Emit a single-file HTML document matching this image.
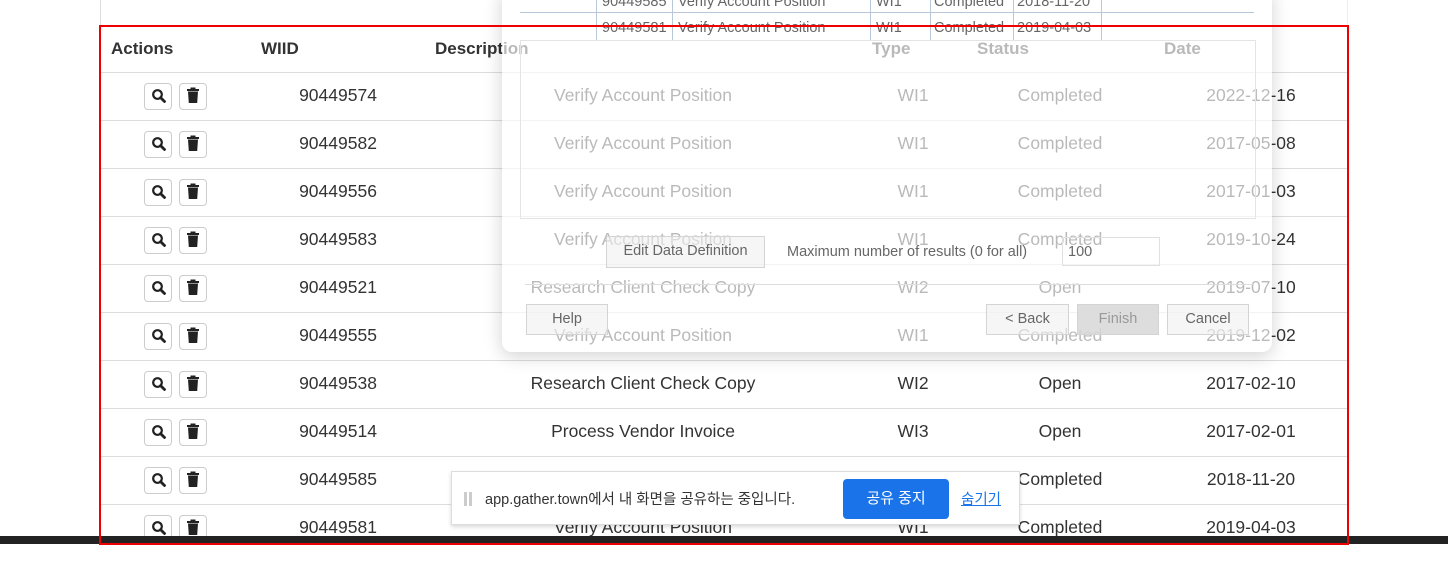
<!DOCTYPE html>
<html><head><meta charset="utf-8"><style>
*{margin:0;padding:0;box-sizing:border-box}
body{width:1448px;height:570px;background:#fff;position:relative;overflow:hidden;font-family:"Liberation Sans",Arial,sans-serif;color:#333}
.a{position:absolute}
.h{position:absolute;top:39px;font-weight:bold;font-size:17px;color:#333}
.row{position:absolute;left:100px;width:1248px;height:48px;border-top:1px solid #ddd}
.c{position:absolute;top:12px;font-size:17.5px;text-align:center;transform:translateX(-50%);white-space:nowrap}
.btn{position:absolute;top:10px;width:28px;height:27px;border:1px solid #ccc;border-radius:4px;background:#fff}
.dlg{position:absolute;left:502px;top:-10px;width:770px;height:362px;background:rgba(255,255,255,.66);border-radius:0 0 10px 10px;box-shadow:0 4px 18px rgba(0,0,0,.18)}
.dt{font-family:"Liberation Sans","Noto Sans CJK KR",sans-serif;color:#666;font-size:14.5px;position:absolute}
.db{position:absolute;border:1px solid #d4d4d4;background:rgba(240,240,240,.6);font-size:14.5px;color:#666;text-align:center;line-height:29px}
</style></head><body>
<div class="a" style="left:100px;top:0;width:1px;height:25px;background:#ddd"></div>
<div class="a" style="left:1347px;top:0;width:1px;height:25px;background:#eee"></div>

<div class="h" style="left:111px">Actions</div>
<div class="h" style="left:261px">WIID</div>
<div class="h" style="left:435px">Description</div>
<div class="h" style="left:872px">Type</div>
<div class="h" style="left:977px">Status</div>
<div class="h" style="left:1164px">Date</div>

<div class="row" style="top:72px"><div class="btn" style="left:44px"></div><div class="btn" style="left:79px"></div><div class="c" style="left:238px">90449574</div><div class="c" style="left:543px">Verify Account Position</div><div class="c" style="left:813px">WI1</div><div class="c" style="left:960px">Completed</div><div class="c" style="left:1151px">2022-12-16</div></div>
<div class="row" style="top:120px"><div class="btn" style="left:44px"></div><div class="btn" style="left:79px"></div><div class="c" style="left:238px">90449582</div><div class="c" style="left:543px">Verify Account Position</div><div class="c" style="left:813px">WI1</div><div class="c" style="left:960px">Completed</div><div class="c" style="left:1151px">2017-05-08</div></div>
<div class="row" style="top:168px"><div class="btn" style="left:44px"></div><div class="btn" style="left:79px"></div><div class="c" style="left:238px">90449556</div><div class="c" style="left:543px">Verify Account Position</div><div class="c" style="left:813px">WI1</div><div class="c" style="left:960px">Completed</div><div class="c" style="left:1151px">2017-01-03</div></div>
<div class="row" style="top:216px"><div class="btn" style="left:44px"></div><div class="btn" style="left:79px"></div><div class="c" style="left:238px">90449583</div><div class="c" style="left:543px">Verify Account Position</div><div class="c" style="left:813px">WI1</div><div class="c" style="left:960px">Completed</div><div class="c" style="left:1151px">2019-10-24</div></div>
<div class="row" style="top:264px"><div class="btn" style="left:44px"></div><div class="btn" style="left:79px"></div><div class="c" style="left:238px">90449521</div><div class="c" style="left:543px">Research Client Check Copy</div><div class="c" style="left:813px">WI2</div><div class="c" style="left:960px">Open</div><div class="c" style="left:1151px">2019-07-10</div></div>
<div class="row" style="top:312px"><div class="btn" style="left:44px"></div><div class="btn" style="left:79px"></div><div class="c" style="left:238px">90449555</div><div class="c" style="left:543px">Verify Account Position</div><div class="c" style="left:813px">WI1</div><div class="c" style="left:960px">Completed</div><div class="c" style="left:1151px">2019-12-02</div></div>
<div class="row" style="top:360px"><div class="btn" style="left:44px"></div><div class="btn" style="left:79px"></div><div class="c" style="left:238px">90449538</div><div class="c" style="left:543px">Research Client Check Copy</div><div class="c" style="left:813px">WI2</div><div class="c" style="left:960px">Open</div><div class="c" style="left:1151px">2017-02-10</div></div>
<div class="row" style="top:408px"><div class="btn" style="left:44px"></div><div class="btn" style="left:79px"></div><div class="c" style="left:238px">90449514</div><div class="c" style="left:543px">Process Vendor Invoice</div><div class="c" style="left:813px">WI3</div><div class="c" style="left:960px">Open</div><div class="c" style="left:1151px">2017-02-01</div></div>
<div class="row" style="top:456px"><div class="btn" style="left:44px"></div><div class="btn" style="left:79px"></div><div class="c" style="left:238px">90449585</div><div class="c" style="left:543px">Verify Account Position</div><div class="c" style="left:813px">WI1</div><div class="c" style="left:960px">Completed</div><div class="c" style="left:1151px">2018-11-20</div></div>
<div class="row" style="top:504px"><div class="btn" style="left:44px"></div><div class="btn" style="left:79px"></div><div class="c" style="left:238px">90449581</div><div class="c" style="left:543px">Verify Account Position</div><div class="c" style="left:813px">WI1</div><div class="c" style="left:960px">Completed</div><div class="c" style="left:1151px">2019-04-03</div></div>

<svg class="a" style="left:0;top:0" width="1448" height="570">
<defs>
<g id="mag"><circle cx="-1.5" cy="-1.5" r="4.3" fill="none" stroke="#222" stroke-width="2.2"/><path d="M1.6 1.6 L5.5 5.5" stroke="#222" stroke-width="2.8" stroke-linecap="round"/></g>
<g id="trash"><rect x="-6" y="-7" width="12" height="2" fill="#222"/><rect x="-2.5" y="-8.5" width="5" height="2" fill="#222"/><path d="M-5 -4.5 H5 L4.2 7 H-4.2 Z" fill="#222"/></g>
</defs>
<use href="#mag" x="159" y="96"/><use href="#trash" x="193" y="96"/>
<use href="#mag" x="159" y="144"/><use href="#trash" x="193" y="144"/>
<use href="#mag" x="159" y="192"/><use href="#trash" x="193" y="192"/>
<use href="#mag" x="159" y="240"/><use href="#trash" x="193" y="240"/>
<use href="#mag" x="159" y="288"/><use href="#trash" x="193" y="288"/>
<use href="#mag" x="159" y="336"/><use href="#trash" x="193" y="336"/>
<use href="#mag" x="159" y="384"/><use href="#trash" x="193" y="384"/>
<use href="#mag" x="159" y="432"/><use href="#trash" x="193" y="432"/>
<use href="#mag" x="159" y="480"/><use href="#trash" x="193" y="480"/>
<use href="#mag" x="159" y="528"/><use href="#trash" x="193" y="528"/>
</svg>

<div class="a" style="left:0;top:536px;width:1448px;height:8px;background:#222"></div>

<div class="dlg">
  <div class="a" style="left:18px;top:10px;width:734px;height:41px;">
    <div class="a" style="left:0;top:12px;width:734px;height:1px;background:#b8c8d8"></div>
    <div class="a" style="left:0;top:40px;width:734px;height:1px;background:#b8c8d8"></div>
    <div class="a" style="left:76px;top:0;width:1px;height:41px;background:#b8c8d8"></div>
    <div class="a" style="left:152px;top:0;width:1px;height:41px;background:#b8c8d8"></div>
    <div class="a" style="left:350px;top:0;width:1px;height:41px;background:#b8c8d8"></div>
    <div class="a" style="left:410px;top:0;width:1px;height:41px;background:#b8c8d8"></div>
    <div class="a" style="left:493px;top:0;width:1px;height:41px;background:#b8c8d8"></div>
    <div class="a" style="left:581px;top:0;width:1px;height:41px;background:#b8c8d8"></div>
    <div class="dt" style="left:82px;top:-6px">90449585</div><div class="dt" style="left:158px;top:-6px">Verify Account Position</div><div class="dt" style="left:356px;top:-6px">WI1</div><div class="dt" style="left:414px;top:-6px">Completed</div><div class="dt" style="left:497px;top:-6px">2018-11-20</div>
    <div class="dt" style="left:82px;top:20px">90449581</div><div class="dt" style="left:158px;top:20px">Verify Account Position</div><div class="dt" style="left:356px;top:20px">WI1</div><div class="dt" style="left:414px;top:20px">Completed</div><div class="dt" style="left:497px;top:20px">2019-04-03</div>
  </div>
  <div class="a" style="left:18px;top:50px;width:736px;height:179px;border:1px solid #e4e4e4"></div>
  <div class="db" style="left:104px;top:246px;width:159px;height:32px">Edit Data Definition</div>
  <div class="dt" style="left:285px;top:254px">Maximum number of results (0 for all)</div>
  <div class="a" style="left:560px;top:247px;width:98px;height:29px;border:1px solid #e0e0e0"></div>
  <div class="dt" style="left:566px;top:254px">100</div>
  <div class="a" style="left:23px;top:294px;width:728px;height:1px;background:#ddd"></div>
  <div class="db" style="left:24px;top:314px;width:82px;height:31px">Help</div>
  <div class="db" style="left:484px;top:314px;width:83px;height:31px">&lt; Back</div>
  <div class="db" style="left:575px;top:314px;width:82px;height:31px;background:rgba(215,215,215,.85);color:#999">Finish</div>
  <div class="db" style="left:665px;top:314px;width:82px;height:31px">Cancel</div>
</div>

<div class="a" style="left:99px;top:25px;width:1250px;height:520px;border:2px solid #e00"></div>

<div class="a" style="left:451px;top:471px;width:569px;height:54px;background:#fff;border:1px solid #ddd;box-shadow:0 2px 4px rgba(0,0,0,.15);font-family:'Liberation Sans','Noto Sans CJK KR',sans-serif">
  <div class="a" style="left:12px;top:20px;width:3px;height:14px;background:#ccc"></div>
  <div class="a" style="left:17px;top:20px;width:3px;height:14px;background:#ccc"></div>
  <div class="a" style="left:33px;top:16px;font-size:14.5px;color:#333;white-space:nowrap">app.gather.town에서 내 화면을 공유하는 중입니다.</div>
  <div class="a" style="left:391px;top:7px;width:106px;height:40px;background:#1a73e8;border-radius:4px;color:#fff;font-size:15px;text-align:center;line-height:40px">공유 중지</div>
  <div class="a" style="left:509px;top:16px;font-size:14.5px;color:#1a73e8;text-decoration:underline">숨기기</div>
</div>
</body></html>
